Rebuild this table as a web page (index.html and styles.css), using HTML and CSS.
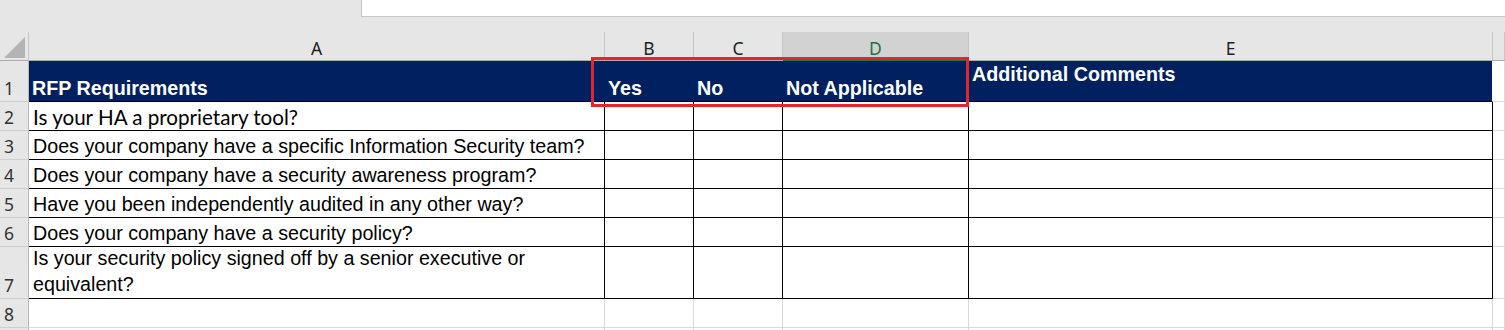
FILE: index.html
```html
<!DOCTYPE html>
<html lang="en">
<head>
  <meta charset="UTF-8" />
  <title>RFP Requirements</title>
  <link rel="stylesheet" href="styles.css">
</head>
<body>
  <div class="topbar">
    <div class="namearea"></div>
    <div class="formula"></div>
  </div>

  <div class="sheet">
    <div class="band"></div>

    <!-- column letters -->
    <div class="corner"><span class="tri"></span></div>
    <div class="col">A</div>
    <div class="col">B</div>
    <div class="col">C</div>
    <div class="col sel">D</div>
    <div class="col">E</div>
    <div class="col"></div>

    <!-- row 1: header -->
    <div class="num">1</div>
    <div class="c hd">RFP Requirements</div>
    <div class="c hd">Yes</div>
    <div class="c hd">No</div>
    <div class="c hd">Not Applicable</div>
    <div class="c hd top last">Additional Comments</div>
    <div class="c"></div>

    <div class="num">2</div>
    <div class="c b cal">Is your HA a proprietary tool?</div>
    <div class="c b"></div><div class="c b"></div><div class="c b"></div><div class="c b"></div>
    <div class="c"></div>

    <div class="num">3</div>
    <div class="c b">Does your company have a specific Information Security team?</div>
    <div class="c b"></div><div class="c b"></div><div class="c b"></div><div class="c b"></div>
    <div class="c"></div>

    <div class="num">4</div>
    <div class="c b">Does your company have a security awareness program?</div>
    <div class="c b"></div><div class="c b"></div><div class="c b"></div><div class="c b"></div>
    <div class="c"></div>

    <div class="num">5</div>
    <div class="c b">Have you been independently audited in any other way?</div>
    <div class="c b"></div><div class="c b"></div><div class="c b"></div><div class="c b"></div>
    <div class="c"></div>

    <div class="num">6</div>
    <div class="c b">Does your company have a security policy?</div>
    <div class="c b"></div><div class="c b"></div><div class="c b"></div><div class="c b"></div>
    <div class="c"></div>

    <div class="num">7</div>
    <div class="c b tall">Is your security policy signed off by a senior executive or<br>equivalent?</div>
    <div class="c b"></div><div class="c b"></div><div class="c b"></div><div class="c b"></div>
    <div class="c"></div>

    <div class="num">8</div>
    <div class="c"></div><div class="c"></div><div class="c"></div><div class="c"></div><div class="c"></div><div class="c"></div>

    <div class="num"></div>
    <div class="c"></div><div class="c"></div><div class="c"></div><div class="c"></div><div class="c"></div><div class="c"></div>

    <!-- highlight round the answer columns -->
    <div class="mark"></div>
  </div>
</body>
</html>
```

FILE: styles.css
```css
body {
  margin: 0;
  font-family: "Liberation Sans", Arial, sans-serif;
  background: #fff;
  overflow: hidden;
}

.topbar {
  display: flex;
  height: 17px;
}

.namearea {
  width: 361px;
  background: #e6e6e6;
}

.formula {
  flex: 1;
  background: #fff;
  border-left: 1px solid #c6c6c6;
  border-bottom: 1px solid #c6c6c6;
}

.sheet {
  position: relative;
  display: grid;
  grid-template-columns: 29px 576px 89px 89px 186px 524px 1fr;
  grid-template-rows: 15px 29px 41px repeat(5, 29px) 52px 29px 29px;
  background: #e6e6e6;
}

.band {
  grid-column: 1 / -1;
}

.sheet > div:not(.band):not(.mark) {
  box-sizing: border-box;
}

/* top-left select-all corner */
.corner {
  position: relative;
  background: #e6e6e6;
  border-right: 1px solid #c6c6c6;
  border-bottom: 1px solid #ababab;
}

.tri {
  position: absolute;
  right: 3px;
  bottom: 2px;
  width: 0;
  height: 0;
  border-left: 21px solid transparent;
  border-bottom: 21px solid #b4b4b4;
}

.col {
  display: flex;
  justify-content: center;
  align-items: flex-end;
  padding-bottom: 2px;
  background: #e6e6e6;
  border-right: 1px solid #c6c6c6;
  border-bottom: 1px solid #ababab;
  font: 17.5px/20px "Noto Sans", sans-serif;
  color: #222;
}

.col.sel {
  background: #d2d2d2;
  color: #217346;
  border-bottom-color: #217346;
}

.num {
  display: flex;
  align-items: flex-end;
  padding: 0 0 3px 4px;
  background: #e6e6e6;
  border-right: 1px solid #b9b9b9;
  border-bottom: 1px solid #cfcfcf;
  font: 17.5px/20px "Noto Sans", sans-serif;
  color: #333;
}

/* spreadsheet cells */
.c {
  display: flex;
  align-items: flex-end;
  padding: 0 0 1px 4px;
  background: #fff;
  border-right: 1px solid #d9d9d9;
  border-bottom: 1px solid #d9d9d9;
  font-size: 19.7px;
  line-height: 24px;
  color: #000;
  white-space: nowrap;
}

.c.b {
  border-right-color: #000;
  border-bottom-color: #000;
}

.c.tall {
  line-height: 25.5px;
}

.c.hd {
  padding-left: 3px;
  background: #002060;
  color: #fff;
  font-weight: bold;
  border-right-color: #002060;
  border-bottom-color: #000;
}

.c.hd.top {
  align-items: flex-start;
  padding-top: 1px;
}

.c.hd.last {
  border-right-color: #fff;
}

.c.cal {
  font-family: Lato, "Open Sans", sans-serif;
  font-size: 20.6px;
}

.mark {
  position: absolute;
  left: 591px;
  top: 40px;
  width: 378px;
  height: 50px;
  box-sizing: border-box;
  border: 3px solid #e3262e;
}
```
